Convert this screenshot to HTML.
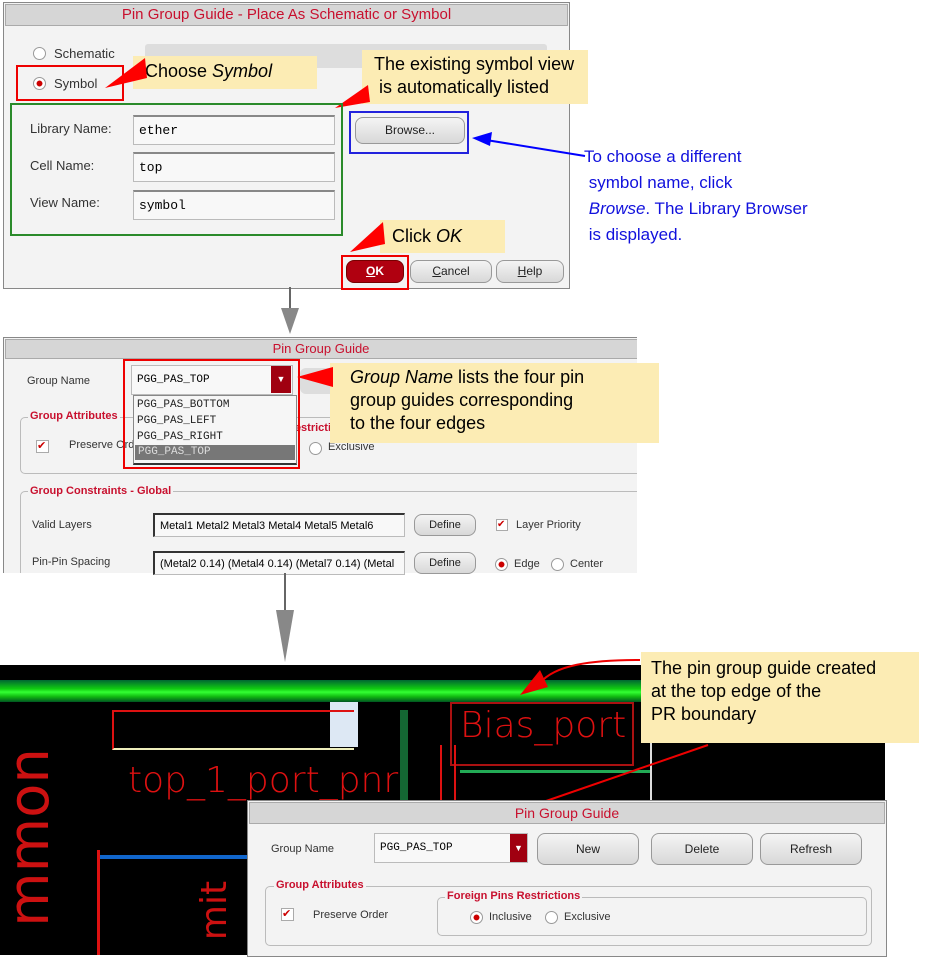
<!DOCTYPE html>
<html><head><style>
body{margin:0;width:937px;height:959px;background:#fff;position:relative;overflow:hidden;font-family:"Liberation Sans",sans-serif;}
.a{position:absolute;}
.dlg{background:#f3f3f3;border:1px solid #888;}
.tb{background:#d6d6d6;border:1px solid #aaa;color:#c8102e;text-align:center;font-size:15px;}
.btn{position:absolute;background:linear-gradient(#f4f4f4,#d8d8d8);border:1px solid #999;border-radius:8px;text-align:center;font-size:12px;color:#222;}
.fld{position:absolute;background:#f8f8f8;border:1px solid #bbb;border-top:2px solid #888;font-family:"Liberation Mono",monospace;font-size:13px;padding-left:5px;box-sizing:border-box;}
.lbl{position:absolute;font-size:13px;color:#333;}
.note{position:absolute;background:#fcecb4;font-size:18px;color:#000;line-height:23px;}
.rad{position:absolute;width:11px;height:11px;border-radius:50%;border:1px solid #999;background:#fff;}
.sm{font-size:11px;}
.grp{position:absolute;border:1px solid #bbb;border-radius:5px;}
.gt{position:absolute;background:#f3f3f3;color:#c8102e;font-weight:bold;font-size:11px;padding:0 2px;}
</style></head><body>

<!-- dialog 1 -->
<div class="a dlg" style="left:3px;top:2px;width:565px;height:285px;"></div>
<div class="a tb" style="left:5px;top:4px;width:561px;height:20px;line-height:20px;">Pin Group Guide - Place As Schematic or Symbol</div>
<div class="a" style="left:145px;top:44px;width:402px;height:24px;background:#ddd;border-radius:3px;"></div>
<div class="rad" style="left:33px;top:47px;"></div>
<div class="lbl" style="left:54px;top:46px;">Schematic</div>
<div class="rad" style="left:33px;top:77px;background:radial-gradient(#c00 35%,#fff 40%);"></div>
<div class="lbl" style="left:54px;top:76px;">Symbol</div>
<div class="a" style="left:16px;top:65px;width:104px;height:32px;border:2px solid #e00;"></div>
<div class="note" style="left:133px;top:56px;width:172px;height:33px;line-height:30px;padding-left:12px;">Choose <i>Symbol</i></div>
<svg class="a" style="left:95px;top:50px" width="60" height="50"><polygon points="10,38 50,8 52,28" fill="#f00"/></svg>
<div class="note" style="left:362px;top:50px;width:226px;height:54px;padding:3px 0 0 12px;box-sizing:border-box;">The existing symbol view<br>&nbsp;is automatically listed</div>
<svg class="a" style="left:330px;top:80px" width="50" height="30"><polygon points="5,28 38,5 40,22" fill="#f00"/></svg>
<div class="a" style="left:10px;top:103px;width:329px;height:129px;border:2px solid #2a8a2a;"></div>
<div class="lbl" style="left:30px;top:121px;">Library Name:</div>
<div class="lbl" style="left:30px;top:158px;">Cell Name:</div>
<div class="lbl" style="left:30px;top:195px;">View Name:</div>
<div class="fld" style="left:133px;top:115px;width:202px;height:30px;line-height:28px;">ether</div>
<div class="fld" style="left:133px;top:152px;width:202px;height:30px;line-height:28px;">top</div>
<div class="fld" style="left:133px;top:190px;width:202px;height:30px;line-height:28px;">symbol</div>
<div class="a" style="left:349px;top:111px;width:116px;height:39px;border:2px solid #22d;"></div>
<div class="btn" style="left:355px;top:117px;width:108px;height:25px;line-height:25px;">Browse...</div>
<div class="note" style="left:380px;top:220px;width:113px;height:33px;line-height:32px;padding-left:12px;">Click <i>OK</i></div>
<svg class="a" style="left:345px;top:220px" width="45" height="35"><polygon points="5,32 38,2 40,24" fill="#f00"/></svg>
<div class="a" style="left:341px;top:255px;width:64px;height:31px;border:2px solid #e00;"></div>
<div class="btn" style="left:346px;top:260px;width:56px;height:21px;line-height:21px;background:#b00010;color:#fff;font-weight:bold;border-color:#700;"><u>O</u>K</div>
<div class="btn" style="left:410px;top:260px;width:80px;height:21px;line-height:21px;"><u>C</u>ancel</div>
<div class="btn" style="left:496px;top:260px;width:66px;height:21px;line-height:21px;"><u>H</u>elp</div>
<svg class="a" style="left:470px;top:130px" width="120" height="40"><line x1="10" y1="9" x2="115" y2="26" stroke="#00f" stroke-width="2"/><polygon points="2,8 22,2 20,16" fill="#00f"/></svg>
<div class="a" style="left:584px;top:144px;font-size:17px;color:#11d;line-height:26px;">To choose a different<br>&nbsp;symbol name, click<br>&nbsp;<i>Browse</i>. The Library Browser<br>&nbsp;is displayed.</div>

<!-- connector arrows -->
<div class="a" style="left:289px;top:287px;width:2px;height:25px;background:#666;"></div>
<svg class="a" style="left:281px;top:308px" width="18" height="26"><polygon points="0,0 18,0 9,26" fill="#888"/></svg>

<!-- dialog 2 -->
<div class="a" style="left:3px;top:337px;width:634px;height:236px;overflow:hidden;">
<div class="a dlg" style="left:0;top:0;width:640px;height:240px;"></div>
<div class="a tb" style="left:2px;top:2px;width:640px;height:18px;line-height:18px;font-size:13px;text-indent:-10px;">Pin Group Guide</div>
<div class="grp" style="left:17px;top:80px;width:630px;height:55px;"></div>
<div class="gt" style="left:25px;top:73px;">Group Attributes</div>
<div class="grp" style="left:17px;top:154px;width:630px;height:100px;"></div>
<div class="gt" style="left:25px;top:148px;">Group Constraints - Global</div>
</div>
<div class="lbl sm" style="left:27px;top:375px;">Group Name</div>
<div class="fld" style="left:131px;top:365px;width:162px;height:30px;line-height:28px;font-size:11px;border-top:1px solid #bbb;">PGG_PAS_TOP</div>
<div class="a" style="left:271px;top:366px;width:20px;height:27px;background:#a00010;color:#fff;font-size:9px;text-align:center;line-height:27px;">▼</div>
<div class="a" style="left:36px;top:440px;width:11px;height:11px;border:1px solid #aaa;background:#fff;color:#c00;font-size:11px;line-height:11px;">✔</div>
<div class="lbl sm" style="left:69px;top:439px;">Preserve Order</div>
<div class="gt" style="left:285px;top:422px;">Restrictions</div>
<div class="rad" style="left:309px;top:442px;"></div>
<div class="lbl sm" style="left:328px;top:441px;">Exclusive</div>
<div class="lbl sm" style="left:32px;top:519px;">Valid Layers</div>
<div class="lbl sm" style="left:32px;top:556px;">Pin-Pin Spacing</div>
<div class="fld" style="left:153px;top:513px;width:252px;height:24px;line-height:22px;font-family:'Liberation Sans';font-size:11px;border-left:2px solid #333;border-top:2px solid #333;white-space:nowrap;overflow:hidden;">Metal1 Metal2 Metal3 Metal4 Metal5 Metal6</div>
<div class="fld" style="left:153px;top:551px;width:252px;height:24px;line-height:22px;font-family:'Liberation Sans';font-size:11px;border-left:2px solid #333;border-top:2px solid #333;white-space:nowrap;overflow:hidden;">(Metal2 0.14) (Metal4 0.14) (Metal7 0.14) (Metal</div>
<div class="btn" style="left:414px;top:514px;width:60px;height:20px;line-height:20px;font-size:11px;">Define</div>
<div class="btn" style="left:414px;top:552px;width:60px;height:20px;line-height:20px;font-size:11px;">Define</div>
<div class="a" style="left:496px;top:519px;width:10px;height:10px;border:1px solid #aaa;background:#fff;color:#c00;font-size:10px;line-height:10px;">✔</div>
<div class="lbl sm" style="left:516px;top:519px;">Layer Priority</div>
<div class="rad" style="left:495px;top:558px;background:radial-gradient(#c00 35%,#fff 40%);"></div>
<div class="lbl sm" style="left:514px;top:558px;">Edge</div>
<div class="rad" style="left:551px;top:558px;"></div>
<div class="lbl sm" style="left:570px;top:558px;">Center</div>
<div class="a" style="left:300px;top:368px;width:50px;height:26px;background:#ddd;border-radius:6px;"></div>
<!-- dropdown -->
<div class="a" style="left:133px;top:395px;width:162px;height:67px;background:#f6f6f6;border:1px solid #888;border-bottom:2px solid #333;"></div>
<div class="a" style="left:137px;top:397px;font-family:'Liberation Mono',monospace;font-size:11px;line-height:16px;color:#222;">PGG_PAS_BOTTOM<br>PGG_PAS_LEFT<br>PGG_PAS_RIGHT</div>
<div class="a" style="left:135px;top:445px;width:160px;height:15px;background:#777;color:#ddd;font-family:'Liberation Mono',monospace;font-size:11px;line-height:15px;padding-left:3px;box-sizing:border-box;">PGG_PAS_TOP</div>
<div class="a" style="left:123px;top:359px;width:173px;height:106px;border:2px solid #e00;"></div>
<div class="note" style="left:330px;top:363px;width:329px;height:80px;padding:3px 0 0 20px;box-sizing:border-box;"><i>Group Name</i> lists the four pin<br>group guides corresponding<br>to the four edges</div>
<svg class="a" style="left:295px;top:365px" width="40" height="25"><polygon points="2,12 38,2 38,22" fill="#f00"/></svg>

<div class="a" style="left:284px;top:573px;width:2px;height:40px;background:#666;"></div>
<svg class="a" style="left:276px;top:610px" width="18" height="52"><polygon points="0,0 18,0 9,52" fill="#888"/></svg>

<!-- layout -->
<div class="a" style="left:0;top:665px;width:885px;height:290px;background:#000;overflow:hidden;">
 <div class="a" style="left:0;top:15px;width:885px;height:22px;background:linear-gradient(#063 0%,#1c1 40%,#3f3 55%,#1b1 75%,#052 100%);"></div>
 <div class="a" style="left:330px;top:37px;width:28px;height:45px;background:#dde8f4;"></div>
 <div class="a" style="left:112px;top:45px;width:240px;height:36px;border:2px solid #d11;border-bottom:2px solid #eeb;border-right:none;"></div>
 <div class="a" style="left:450px;top:37px;width:180px;height:60px;border:2px solid #a11;"></div>
 <div class="a" style="left:460px;top:40px;font-size:36px;color:#d11;font-family:'DejaVu Sans';font-weight:200;">Bias_port</div>
 <div class="a" style="left:128px;top:95px;font-size:36px;color:#d11;font-family:'DejaVu Sans';font-weight:200;">top_1_port_pnr</div>
 <div class="a" style="left:-60px;top:140px;font-size:56px;color:#c11;transform:rotate(-90deg);font-family:'DejaVu Sans';">mmon</div>
 <div class="a" style="left:185px;top:225px;font-size:36px;color:#c11;transform:rotate(-90deg);font-family:'DejaVu Sans';">mit</div>
 <div class="a" style="left:97px;top:190px;width:200px;height:4px;background:#16c;"></div>
 <div class="a" style="left:97px;top:185px;width:3px;height:105px;background:#d11;"></div>
 <div class="a" style="left:440px;top:80px;width:12px;height:130px;border-left:2px solid #d11;border-right:2px solid #d11;"></div>
 <div class="a" style="left:460px;top:105px;width:190px;height:3px;background:#2a5;"></div>
 <div class="a" style="left:650px;top:40px;width:2px;height:250px;background:#ddd;"></div>
 <div class="a" style="left:400px;top:45px;width:8px;height:150px;background:#2a5;opacity:.6;"></div>
</div>
<div class="note" style="left:641px;top:652px;width:278px;height:91px;padding:5px 0 0 10px;box-sizing:border-box;font-size:18px;">The pin group guide created<br>at the top edge of the<br>PR boundary</div>
<svg class="a" style="left:480px;top:645px" width="250" height="180"><path d="M160,15 C110,15 75,20 60,38" stroke="#e00" stroke-width="2" fill="none"/><polygon points="40,50 60,25 68,42" fill="#e00"/><line x1="228" y1="100" x2="40" y2="165" stroke="#e00" stroke-width="2"/><polygon points="20,175 40,155 48,170" fill="#e00"/></svg>

<!-- dialog 3 -->
<div class="a dlg" style="left:247px;top:800px;width:638px;height:155px;"></div>
<div class="a tb" style="left:249px;top:802px;width:634px;height:20px;line-height:20px;font-size:14px;">Pin Group Guide</div>
<div class="lbl sm" style="left:271px;top:843px;">Group Name</div>
<div class="fld" style="left:374px;top:833px;width:154px;height:30px;line-height:28px;font-size:11px;border-top:1px solid #bbb;">PGG_PAS_TOP</div>
<div class="a" style="left:510px;top:834px;width:17px;height:28px;background:#a00010;color:#fff;font-size:9px;text-align:center;line-height:28px;">▼</div>
<div class="btn" style="left:537px;top:833px;width:100px;height:30px;line-height:30px;">New</div>
<div class="btn" style="left:651px;top:833px;width:100px;height:30px;line-height:30px;">Delete</div>
<div class="btn" style="left:760px;top:833px;width:100px;height:30px;line-height:30px;">Refresh</div>
<div class="grp" style="left:265px;top:886px;width:605px;height:58px;"></div>
<div class="gt" style="left:274px;top:879px;">Group Attributes</div>
<div class="a" style="left:281px;top:908px;width:11px;height:11px;border:1px solid #aaa;background:#fff;color:#c00;font-size:11px;line-height:11px;">✔</div>
<div class="lbl sm" style="left:313px;top:909px;">Preserve Order</div>
<div class="grp" style="left:437px;top:897px;width:428px;height:37px;"></div>
<div class="gt" style="left:445px;top:890px;">Foreign Pins Restrictions</div>
<div class="rad" style="left:470px;top:911px;background:radial-gradient(#c00 35%,#fff 40%);"></div>
<div class="lbl sm" style="left:489px;top:911px;">Inclusive</div>
<div class="rad" style="left:545px;top:911px;"></div>
<div class="lbl sm" style="left:564px;top:911px;">Exclusive</div>
</body></html>
